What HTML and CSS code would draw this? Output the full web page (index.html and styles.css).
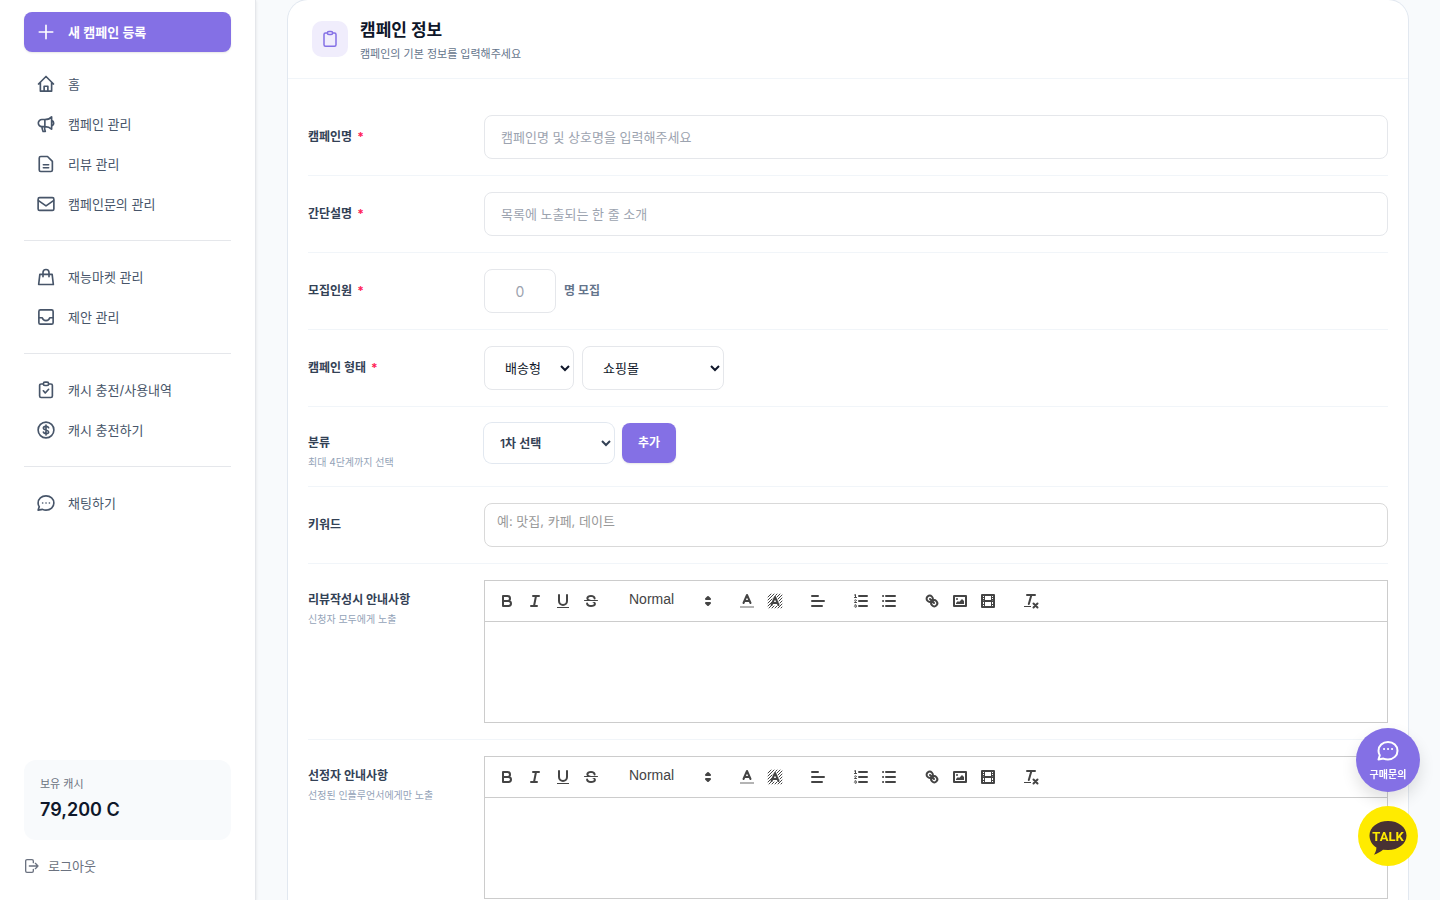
FILE: index.html
```
<!DOCTYPE html>
<html lang="ko">
<head>
    <meta charset="UTF-8">
    <meta name="viewport" content="width=device-width, initial-scale=1.0">
    <title>새 캠페인 등록</title>
    <link rel="stylesheet" href="styles.css">
</head>
<body>
    <div class="layout">
        <aside class="sidebar">
            <nav class="menu">
                <a class="menu-item menu-new" href="#">
                    <svg class="icon" viewBox="0 0 24 24"><path d="M12 3v18M3 12h18"/></svg>
                    새 캠페인 등록
                </a>
                <a class="menu-item" href="#">
                    <svg class="icon" viewBox="0 0 24 24"><path d="M2 12 12 2l10 10M4.500 10v11.500h15V10M9.500 21v-6h5v6"/></svg>
                    홈
                </a>
                <a class="menu-item" href="#">
                    <svg class="icon" viewBox="0 0 24 24"><path d="M10.500 15.500h-4a4.700 4.700 0 0 1 0-9.500h4c4 0 7-1 9-3.500v16.500c-2-2-5-3.500-9-3.500zM10.500 6v9.500M6.500 15.500c.2 2.300.8 4.300 1.600 6.500h3c-.7-1.800-1.100-3.900-1.100-6.500M20 7.500c3 1 3 6 0 7"/></svg>
                    캠페인 관리
                </a>
                <a class="menu-item" href="#">
                    <svg class="icon" viewBox="0 0 24 24"><path d="M5 2h9l6.500 6.500V20a2 2 0 0 1-2 2H5a2 2 0 0 1-2-2V4a2 2 0 0 1 2-2zM8.500 13h7M8.500 17h7"/></svg>
                    리뷰 관리
                </a>
                <a class="menu-item" href="#">
                    <svg class="icon" viewBox="0 0 24 24"><rect x="1.500" y="3.500" width="21" height="17" rx="2"/><path d="m2 7.500 10 7 10-7"/></svg>
                    캠페인문의 관리
                </a>
                <hr class="menu-line">
                <a class="menu-item" href="#">
                    <svg class="icon" viewBox="0 0 24 24"><path d="M3.800 8.500h16.400l1.600 13.500H2.200zM8 11.500V6a4 4 0 0 1 8 0v5.500"/></svg>
                    재능마켓 관리
                </a>
                <a class="menu-item" href="#">
                    <svg class="icon" viewBox="0 0 24 24"><rect x="2.500" y="2.500" width="19" height="19" rx="2"/><path d="M3 13h4c1.500 5 8.500 5 10 0h4"/></svg>
                    제안 관리
                </a>
                <hr class="menu-line">
                <a class="menu-item" href="#">
                    <svg class="icon" viewBox="0 0 24 24"><path d="M8.500 4H5.500a2 2 0 0 0-2 2v14a2 2 0 0 0 2 2h13a2 2 0 0 0 2-2V6a2 2 0 0 0-2-2h-3"/><rect x="8.500" y="1.500" width="7" height="4.500" rx="2"/><path d="m8.500 13 2.500 3 4.500-5"/></svg>
                    캐시 충전/사용내역
                </a>
                <a class="menu-item" href="#">
                    <svg class="icon" viewBox="0 0 24 24"><circle cx="12" cy="12" r="10.500"/><path d="M15.500 9c-1-2.500-7-2.300-7 .5 0 3 7 2 7 5s-6 3-7 .3M12 5.500v13"/></svg>
                    캐시 충전하기
                </a>
                <hr class="menu-line">
                <a class="menu-item" href="#">
                    <svg class="icon" viewBox="0 0 24 24"><path d="M12 2.500c6 0 10.500 4 10.500 9.500s-4.500 9.500-10.500 9.500c-1.700 0-3.200-.3-4.600-1L1.500 21.500l1.500-4.500A8.400 8.400 0 0 1 1.500 12c0-5.500 4.500-9.500 10.500-9.500zM7.500 12h.1M12 12h.1M16.500 12h.1"/></svg>
                    채팅하기
                </a>
            </nav>
            <div class="sidebar-bottom">
                <div class="cash">
                    <p class="cash-label">보유 캐시</p>
                    <p class="cash-value">79,200 C</p>
                </div>
                <button type="button" class="logout">
                    <svg class="icon" viewBox="0 0 24 24"><path d="M14 7V4.500a2 2 0 0 0-2-2H4.500a2 2 0 0 0-2 2v15a2 2 0 0 0 2 2H12a2 2 0 0 0 2-2V17M8 12h13M17 8l4 4-4 4"/></svg>
                    로그아웃
                </button>
            </div>
        </aside>

        <main class="main">
            <form class="card">
                <header class="card-header">
                    <span class="card-icon">
                        <svg class="icon" viewBox="0 0 24 24"><path d="M8.500 4H6a2 2 0 0 0-2 2v13.500a2 2 0 0 0 2 2h12a2 2 0 0 0 2-2V6a2 2 0 0 0-2-2h-2.500"/><rect x="8.500" y="2" width="7" height="4" rx="2"/></svg>
                    </span>
                    <div>
                        <h2 class="card-title">캠페인 정보</h2>
                        <p class="card-desc">캠페인의 기본 정보를 입력해주세요</p>
                    </div>
                </header>

                <div class="card-body">
                    <div class="row">
                        <label class="label" for="name">캠페인명<span class="required">*</span></label>
                        <input class="input" id="name" type="text" placeholder="캠페인명 및 상호명을 입력해주세요">
                    </div>
                    <div class="row">
                        <label class="label" for="summary">간단설명<span class="required">*</span></label>
                        <input class="input" id="summary" type="text" placeholder="목록에 노출되는 한 줄 소개">
                    </div>
                    <div class="row">
                        <label class="label" for="people">모집인원<span class="required">*</span></label>
                        <div class="field">
                            <input class="input input-count" id="people" type="text" inputmode="numeric" placeholder="0">
                            <span class="unit">명 모집</span>
                        </div>
                    </div>
                    <div class="row">
                        <label class="label" for="type">캠페인 형태<span class="required">*</span></label>
                        <div class="field">
                            <select class="input select" id="type"><option>배송형</option><option>방문형</option></select>
                            <select class="input select select-wide" aria-label="상세 형태"><option>쇼핑몰</option></select>
                        </div>
                    </div>
                    <div class="row row-top">
                        <div class="label-group">
                            <label class="label" for="category">분류</label>
                            <p class="hint">최대 4단계까지 선택</p>
                        </div>
                        <div class="field">
                            <select class="category" id="category"><option>1차 선택</option></select>
                            <button type="button" class="add-btn">추가</button>
                        </div>
                    </div>
                    <div class="row">
                        <label class="label" for="keyword">키워드</label>
                        <textarea class="keyword" id="keyword" rows="1" placeholder="예: 맛집, 카페, 데이트"></textarea>
                    </div>
                    <div class="row row-top">
                        <div class="label-group">
                            <label class="label" for="guide-all">리뷰작성시 안내사항</label>
                            <p class="hint">신청자 모두에게 노출</p>
                        </div>
                        <div class="editor">
                            <div class="toolbar"></div>
                            <textarea class="editor-text" id="guide-all"></textarea>
                        </div>
                    </div>
                    <div class="row row-top">
                        <div class="label-group">
                            <label class="label" for="guide-picked">선정자 안내사항</label>
                            <p class="hint">선정된 인플루언서에게만 노출</p>
                        </div>
                        <div class="editor">
                            <div class="toolbar"></div>
                            <textarea class="editor-text" id="guide-picked"></textarea>
                        </div>
                    </div>
                </div>
            </form>
        </main>
    </div>

    <div class="floating">
        <button type="button" class="float-btn float-ask">
            <svg class="icon" viewBox="0 0 24 24"><path d="M12 3c5.500 0 9.500 3.800 9.500 8.700s-4 8.700-9.500 8.700c-1.700 0-3.200-.3-4.600-.8L2.500 20.500l1.300-4.200a8.400 8.400 0 0 1-1.300-4.600C2.500 6.800 6.500 3 12 3zM8 10h.1M12 10h.1M16 10h.1"/></svg>
            구매문의
        </button>
        <button type="button" class="float-btn float-talk" aria-label="카카오톡 상담">
            <svg viewBox="0 0 60 60"><path fill="#483133" d="M30 15c10.500 0 18.500 6.300 18.500 14.500S40.500 44 30 44l-5-.3c-2.500 2-5.500 3.700-9 5 1.500-2.200 2.400-4.500 2.400-7.200-4.200-2.600-6.900-7-6.900-12C11.500 21.300 19.500 15 30 15z"/><text class="talk-text" x="30" y="35" text-anchor="middle">TALK</text></svg>
        </button>
    </div>

    <template id="toolbarTemplate">
        <span class="formats">
            <button type="button" aria-label="bold"><svg viewBox="0 0 18 18"><path d="M5 4h4.500a2.500 2.500 0 0 1 0 5H5zM5 9h5.500a2.500 2.500 0 0 1 0 5H5z"/></svg></button>
            <button type="button" aria-label="italic"><svg viewBox="0 0 18 18"><path d="M7 4h6M5 14h6M8 14l2-10"/></svg></button>
            <button type="button" aria-label="underline"><svg viewBox="0 0 18 18"><path d="M5 3v6a4 4 0 0 0 8 0V3"/><path class="fill" d="M3 15h12v1H3z"/></svg></button>
            <button type="button" aria-label="strike"><svg viewBox="0 0 18 18"><path class="thin" d="M2.500 8.500h13"/><path class="fill" d="M6.400 8h3A8 8 0 0 1 9 7.900C6.900 7.500 6.300 6.700 6.400 6.200 6.500 5.400 7.800 5 9 5c1.800 0 2.600.6 2.600 1.500a1 1 0 0 0 2 0C13.600 4.400 11.800 3 9 3 6.500 3 4.600 4.100 4.400 5.800 4.300 6.600 4.500 7.400 5.100 8zM13 10h-3.500c1.900.4 2.500 1.100 2.300 1.900-.1.700-1.200 1.100-2.800 1.100-1.700 0-2.900-.6-2.900-1.500a1 1 0 0 0-2 0C4.100 13.600 6.100 15 9 15c2.700 0 4.700-1.100 4.900-2.800A2.700 2.700 0 0 0 13 10z"/></svg></button>
        </span>
        <span class="formats picker">
            <select aria-label="heading"><option>Normal</option><option>Heading 1</option><option>Heading 2</option></select>
            <svg viewBox="0 0 18 18"><path class="join" d="m7 11 2 2 2-2zM7 7l2-2 2 2z"/></svg>
        </span>
        <span class="formats">
            <button type="button" aria-label="color"><svg viewBox="0 0 18 18"><path class="pale" d="M2 15h14"/><path d="M5.500 11 9 3l3.500 8M6.500 9h5"/></svg></button>
            <button type="button" aria-label="background"><svg viewBox="0 0 18 18"><path class="thin" d="m2 5 3-3M2 8l6-6M2 11l4-4M11 2 9.500 3.500M2 14l4-4M14 2l-3 3M3 16l2-2M16 3l-4 4M6 16l2-2M16 6l-3 3M9 16l2-2M16 9l-2 2M12 16l4-4M15 16l1-1"/><path d="M5.500 13 9 5l3.500 8M6.500 11h5"/></svg></button>
        </span>
        <span class="formats">
            <button type="button" aria-label="align"><svg viewBox="0 0 18 18"><path d="M3 9h12M3 14h10M3 4h6"/></svg></button>
        </span>
        <span class="formats">
            <button type="button" aria-label="ordered list"><svg viewBox="0 0 18 18"><path d="M7 4h8M7 9h8M7 14h8"/><path class="thin" d="M2.500 5.500h2M3.500 5.500v-3l-1 .5M4.500 10.500h-2c0-1 1.900-1.200 1.900-2 0-.9-1.400-.9-1.900-.2M2.500 14.800c.5.800 2 .7 2-.2 0-.7-1-.6-1-.6s1 0 .9-.7c-.2-.8-1.400-.8-1.900-.1"/></svg></button>
            <button type="button" aria-label="bullet list"><svg viewBox="0 0 18 18"><path d="M6 4h9M6 9h9M6 14h9M3 4h.1M3 9h.1M3 14h.1"/></svg></button>
        </span>
        <span class="formats">
            <button type="button" aria-label="link"><svg viewBox="0 0 18 18"><path d="m7 7 4 4M8.900 4.600c1.400 1.400 1.300 3.100 0 4.300s-2.900 1.400-4.300 0-1.300-3.100 0-4.300 2.900-1.400 4.300 0zM13.400 9.100c-1.400-1.400-3.100-1.300-4.300 0s-1.400 2.900 0 4.300 3.100 1.300 4.300 0 1.400-2.900 0-4.300z"/></svg></button>
            <button type="button" aria-label="image"><svg viewBox="0 0 18 18"><path d="M3 4h12v10H3z"/><circle class="fill" cx="6" cy="7" r="1"/><path class="fill" d="M5 12v-1l2-2 1 1 3-3 2 2v3z"/></svg></button>
            <button type="button" aria-label="video"><svg viewBox="0 0 18 18"><path d="M3 3h12v12H3zM5 9h8"/><path class="thin" d="M5.500 3v12M12.500 3v12M3 5.500h2M3 7.500h2M3 9.500h2M3 12.500h2M13 5.500h2M13 7.500h2M13 9.500h2M13 12.500h2"/></svg></button>
        </span>
        <span class="formats">
            <button type="button" aria-label="clean"><svg viewBox="0 0 18 18"><path d="M5 3h8M9.400 3l-2.600 9M11.500 11.500l4 4M15.500 11.500l-4 4"/><path class="fill" d="M2 14h7v1H2z"/></svg></button>
        </span>
    </template>

    <script>
        // Both editors share the same toolbar
        const template = document.getElementById('toolbarTemplate');
        document.querySelectorAll('.toolbar').forEach((toolbar) => {
            toolbar.appendChild(template.content.cloneNode(true));
        });
    </script>
</body>
</html>
```
FILE: styles.css
```
* {
    margin: 0;
    padding: 0;
    box-sizing: border-box;
    font-family: Inter, 'Noto Sans CJK KR', sans-serif;
}

body {
    background: #f8fafc;
    color: #0f172a;
    font-size: 13px;
    line-height: 20px;
}

button {
    border: none;
    background: none;
    line-height: 20px;
    cursor: pointer;
}

.icon {
    width: 20px;
    height: 20px;
    flex-shrink: 0;
    fill: none;
    stroke: currentColor;
    stroke-width: 2;
    stroke-linecap: round;
    stroke-linejoin: round;
}

.layout {
    display: flex;
    height: 100vh;
    overflow: hidden;
}

/* Sidebar */
.sidebar {
    width: 256px;
    flex-shrink: 0;
    display: flex;
    flex-direction: column;
    justify-content: space-between;
    padding: 12px 24px 20px;
    background: white;
    border-right: 1px solid #e5e7eb;
    box-shadow: 0 1px 3px rgba(0, 0, 0, 0.1);
}

.menu-item {
    display: flex;
    align-items: center;
    gap: 12px;
    height: 40px;
    padding: 0 12px;
    border-radius: 8px;
    color: #475569;
    text-decoration: none;
}

.menu-item .icon {
    padding: 1px;
    stroke-width: 2.2;
}

.menu-new {
    margin-bottom: 12px;
    background: #8470e5;
    color: white;
    font-weight: 600;
    box-shadow: 0 1px 2px rgba(0, 0, 0, 0.1);
}

.menu-line {
    margin: 16px 0;
    border: none;
    border-top: 1px solid #e5e7eb;
}

.cash {
    padding: 16px;
    border-radius: 12px;
    background: #f8fafc;
}

.cash-label {
    color: #6b7280;
    font-size: 11px;
    line-height: 16px;
}

.cash-value {
    margin-top: 4px;
    font-size: 18px;
    font-weight: 600;
    line-height: 28px;
}

.logout {
    display: flex;
    align-items: center;
    gap: 8px;
    height: 28px;
    margin-top: 12px;
    color: #6b7280;
    font-size: 13px;
}

.logout .icon {
    width: 16px;
    height: 16px;
}

/* Campaign form */
.main {
    flex: 1;
    min-width: 0;
    padding: 0 32px;
}

.card {
    border-radius: 20px;
    background: white;
    box-shadow: 0 0 0 1px #e2e8f0;
}

.card-header {
    display: flex;
    align-items: center;
    gap: 12px;
    padding: 16px 24px;
    border-bottom: 1px solid #f1f5f9;
}

.card-icon {
    display: flex;
    align-items: center;
    justify-content: center;
    width: 36px;
    height: 36px;
    border-radius: 10px;
    background: #f0edfc;
    color: #8470e5;
}

.card-icon .icon {
    padding: 1px;
}

.card-title {
    font-size: 17px;
    font-weight: 700;
    line-height: 28px;
}

.card-desc {
    padding-top: 2px;
    color: #64748b;
    font-size: 11px;
    line-height: 16px;
}

.card-body {
    padding: 20px;
}

.row {
    display: flex;
    align-items: center;
    gap: 16px;
    padding: 16px 0;
    border-bottom: 1px solid #f1f5f9;
}

.row-top {
    align-items: flex-start;
}

.label {
    display: block;
    flex: 0 0 160px;
    color: #334155;
    font-size: 12px;
    font-weight: 700;
    line-height: 22px;
}

.label-group {
    flex: 0 0 160px;
    padding-top: 9px;
}

.required {
    margin-left: 5px;
    color: #ff2056;
}

.hint {
    color: #94a3b8;
    font-size: 10px;
    line-height: 16px;
}

.field {
    display: flex;
    align-items: center;
    gap: 8px;
}

.input {
    width: 100%;
    height: 44px;
    padding: 0 16px;
    border: 1px solid #e5e7eb;
    border-radius: 8px;
    background: white;
    color: #0f172a;
    font-size: 13px;
    line-height: 20px;
}

.input::placeholder {
    color: #9ca3af;
}

.input-count {
    width: 72px;
    text-align: center;
    font-size: 14px;
}

.unit {
    color: #64748b;
    font-size: 12px;
    font-weight: 600;
}

.select {
    width: 90px;
}

.select-wide {
    width: 142px;
}

.category {
    width: 130px;
    height: 40px;
    padding: 0 12px;
    border: none;
    border-radius: 8px;
    background: white;
    box-shadow: 0 0 0 1px #e2e8f0;
    color: #334155;
    font-size: 12px;
    font-weight: 600;
}

.add-btn {
    height: 40px;
    padding: 0 16px;
    border-radius: 8px;
    background: #8470e5;
    color: white;
    font-size: 12px;
    font-weight: 700;
    box-shadow: 0 1px 2px rgba(0, 0, 0, 0.1);
}

.keyword {
    width: 100%;
    height: 44px;
    padding: 7px 12px;
    border: 1px solid #d9d9d9;
    border-radius: 8px;
    font-size: 13px;
    line-height: 20px;
    resize: none;
}

.keyword::placeholder {
    color: #999;
}

/* Editor */
.editor {
    flex: 1;
    min-width: 0;
    border: 1px solid #ccc;
}

.toolbar {
    display: flex;
    flex-wrap: wrap;
    gap: 15px;
    padding: 8px;
    border-bottom: 1px solid #ccc;
}

.formats {
    display: flex;
    height: 24px;
}

.formats button {
    width: 28px;
    height: 24px;
    padding: 3px 5px;
}

.formats svg {
    display: block;
    width: 18px;
    height: 18px;
    fill: none;
    stroke: #444;
    stroke-width: 2;
    stroke-linecap: round;
    stroke-linejoin: round;
}

.formats .thin {
    stroke-width: 1;
}

.formats .pale {
    opacity: 0.4;
    stroke-linecap: butt;
}

.formats .fill {
    fill: #444;
    stroke: none;
}

.formats .join {
    fill: #444;
}

.picker {
    align-items: center;
    width: 98px;
    padding-right: 1px;
}

.picker select {
    flex: 1;
    min-width: 0;
    height: 24px;
    padding: 0 0 4px 9px;
    border: none;
    background: none;
    appearance: none;
    color: #444;
    font-family: 'Liberation Sans', Arial, sans-serif;
    font-size: 14px;
}

.editor-text {
    display: block;
    width: 100%;
    height: 100px;
    padding: 12px 16px;
    border: none;
    resize: none;
}

/* Floating buttons */
.floating {
    position: fixed;
    right: 20px;
    bottom: 34px;
    display: flex;
    flex-direction: column;
    align-items: center;
    gap: 14px;
}

.float-btn {
    display: flex;
    flex-direction: column;
    align-items: center;
    justify-content: center;
    border-radius: 50%;
}

.float-ask {
    gap: 4px;
    width: 64px;
    height: 64px;
    background: #8470e5;
    color: white;
    font-size: 10px;
    font-weight: 700;
    line-height: 14px;
    box-shadow: 0 8px 16px rgba(0, 0, 0, 0.12);
}

.float-ask .icon {
    width: 24px;
    height: 24px;
}

.float-talk {
    width: 60px;
    height: 60px;
    background: #ffeb00;
}

.talk-text {
    fill: #ffeb00;
    font-family: Roboto, sans-serif;
    font-size: 13px;
    font-weight: 700;
}
```
